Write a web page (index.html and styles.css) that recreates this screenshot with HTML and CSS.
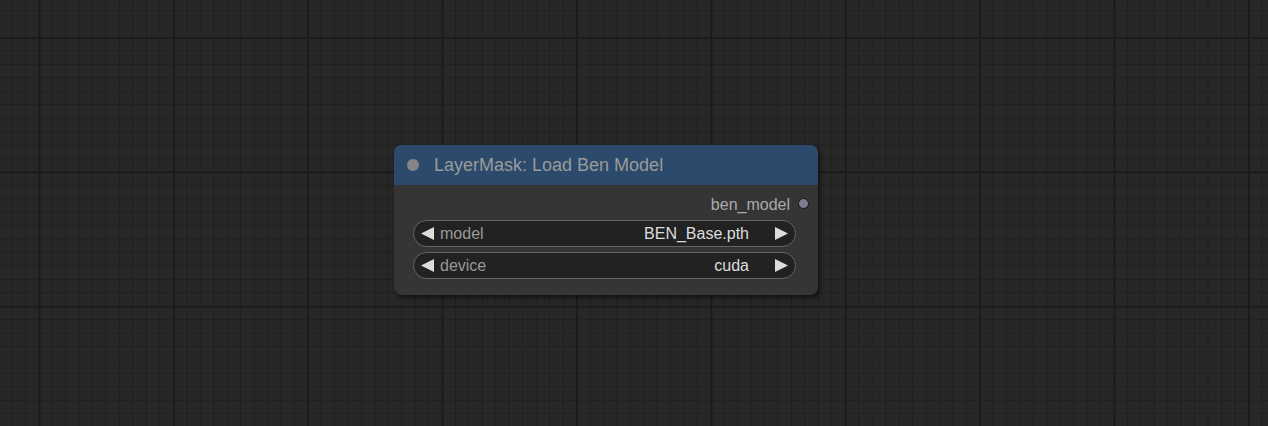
FILE: index.html
```html
<!DOCTYPE html>
<html>
<head>
<meta charset="utf-8">
<link rel="stylesheet" href="styles.css">
</head>
<body>
<div class="canvas">
  <div class="node">
    <div class="node-title">
      <span class="title-dot"></span>
      <span class="title-text">LayerMask: Load Ben Model</span>
    </div>
    <div class="node-body">
      <div class="output-row">
        <span class="output-label">ben_model</span>
        <span class="output-slot"></span>
      </div>
      <div class="widget">
        <svg class="arrow" viewBox="0 0 13 13"><polygon points="0,6.5 13,0 13,13"/></svg>
        <span class="w-label">model</span>
        <span class="w-value">BEN_Base.pth</span>
        <svg class="arrow" viewBox="0 0 13 13"><polygon points="13,6.5 0,0 0,13"/></svg>
      </div>
      <div class="widget">
        <svg class="arrow" viewBox="0 0 13 13"><polygon points="0,6.5 13,0 13,13"/></svg>
        <span class="w-label">device</span>
        <span class="w-value">cuda</span>
        <svg class="arrow" viewBox="0 0 13 13"><polygon points="13,6.5 0,0 0,13"/></svg>
      </div>
    </div>
  </div>
</div>
</body>
</html>
```

FILE: styles.css
```css
html, body {
  margin: 0;
  padding: 0;
  background: #262626;
}
.canvas {
  position: relative;
  width: 1268px;
  height: 426px;
  overflow: hidden;
  font-family: "Liberation Sans", Arial, sans-serif;
  background-color: #272727;
  background-image:
    linear-gradient(to right, #1b1b1b 0, #1b1b1b 1.5px, transparent 1.5px),
    linear-gradient(to bottom, #1b1b1b 0, #1b1b1b 1.5px, transparent 1.5px),
    linear-gradient(to right, #1f1f1f 0, #1f1f1f 1px, transparent 1px),
    linear-gradient(to bottom, #1f1f1f 0, #1f1f1f 1px, transparent 1px);
  background-size: 134.4px 134.4px, 134.4px 134.4px, 13.44px 13.44px, 13.44px 13.44px;
  background-position: 38.5px 37px, 38.5px 37px, 11.6px 10.1px, 11.6px 10.1px;
}
.node {
  position: absolute;
  left: 394px;
  top: 145px;
  width: 424px;
  height: 150px;
  border-radius: 8px;
  background: #353535;
  box-shadow: 2px 3px 4px rgba(0, 0, 0, 0.45);
  display: flex;
  flex-direction: column;
  overflow: hidden;
}
.node-title {
  height: 40px;
  background: #2c4a6b;
  display: flex;
  align-items: center;
  padding-left: 13px;
  gap: 15px;
  flex-shrink: 0;
}
.title-dot {
  width: 12px;
  height: 12px;
  border-radius: 50%;
  background: #858585;
}
.title-text {
  font-size: 18px;
  color: #9a9a9a;
  margin-top: 1px;
}
.node-body {
  display: flex;
  flex-direction: column;
  padding: 8px 22px 16px 19px;
  gap: 5px;
}
.output-row {
  height: 22px;
  display: flex;
  align-items: center;
  justify-content: flex-end;
  gap: 8px;
  margin-right: -13px;
}
.output-label {
  font-size: 16px;
  color: #aaaaaa;
  margin-top: 2px;
}
.output-slot {
  width: 9px;
  height: 9px;
  border-radius: 50%;
  background: #7c7c8e;
  border: 1px solid #151515;
  margin-top: -2px;
}
.widget {
  height: 25px;
  border: 1px solid #666666;
  border-radius: 14px;
  background: #222222;
  display: flex;
  align-items: center;
  padding: 0 7px 0 7px;
  font-size: 16px;
}
.arrow {
  width: 13px;
  height: 13px;
  fill: #dddddd;
  flex-shrink: 0;
}
.w-label {
  color: #999999;
  margin-left: 6px;
  flex: 1;
}
.w-value {
  color: #dddddd;
  margin-right: 26px;
}
```
